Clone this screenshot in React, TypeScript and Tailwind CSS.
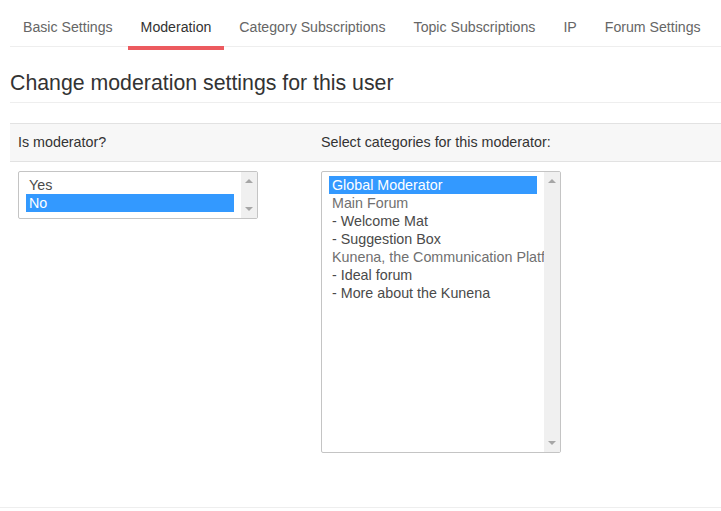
import React from "react";

const tabs = [
  "Basic Settings",
  "Moderation",
  "Category Subscriptions",
  "Topic Subscriptions",
  "IP",
  "Forum Settings",
];

type Option = { label: string; selected?: boolean; muted?: boolean };

function ListBox({
  options,
  height,
}: {
  options: Option[];
  height: string;
}) {
  return (
    <div
      className={`flex w-[240px] ${height} border border-[#c4c4c4] rounded-[2px] bg-white`}
    >
      <div className="flex-1 overflow-hidden pl-[7px] pt-[4px]">
        {options.map((o) => (
          <div
            key={o.label}
            className={`w-[208px] h-[18px] leading-[18px] pl-[3px] whitespace-nowrap text-[14.3px] ${
              o.selected
                ? "bg-[#3399ff] text-white"
                : o.muted
                ? "text-[#707070]"
                : "text-[#4a4a4a]"
            }`}
          >
            {o.label}
          </div>
        ))}
      </div>
      {/* fake scrollbar */}
      <div className="w-[16px] bg-[#f0f0f0] flex flex-col items-center justify-between pt-[7px] pb-[7px]">
        <span className="w-0 h-0 border-x-[4px] border-x-transparent border-b-[4px] border-b-[#a6a6a6]" />
        <span className="w-0 h-0 border-x-[4px] border-x-transparent border-t-[4px] border-t-[#a6a6a6]" />
      </div>
    </div>
  );
}

export default function App() {
  return (
    <div
      className="w-[721px] h-[511px] overflow-hidden bg-white text-[#333]"
      style={{ fontFamily: '"Liberation Sans", Arial, sans-serif' }}
    >
      <div className="pl-[10px]">
        {/* Tabs */}
        <ul className="flex items-start border-b border-[#eee] pt-[7px] w-[720px]">
          {tabs.map((t) => (
            <li
              key={t}
              className={`mr-[2px] px-[13px] pt-[10px] pb-[9px] leading-5 text-[14.15px] whitespace-nowrap border-b-4 -mb-[4px] ${
                t === "Moderation"
                  ? "border-[#ec5a5f] text-[#333]"
                  : "border-transparent text-[#666]"
              }`}
            >
              {t}
            </li>
          ))}
        </ul>

        {/* Heading */}
        <h3 className="mt-[25px] pb-[8px] text-[21.3px] leading-[22px] border-b border-[#eee] w-[720px]">
          Change moderation settings for this user
        </h3>

        {/* Table */}
        <div className="mt-[20px] w-[720px] border-t border-[#e2e2e2]">
          <div className="flex bg-[#f7f7f7] border-b border-[#e2e2e2] text-[14.3px] text-[#333] leading-[21px] py-[8px]">
            <div className="w-[303px] pl-[8px]">Is moderator?</div>
            <div className="pl-[8px]">Select categories for this moderator:</div>
          </div>
          <div className="flex items-start pt-[9px]">
            <div className="w-[303px] pl-[8px]">
              <ListBox
                height="h-[48px]"
                options={[{ label: "Yes" }, { label: "No", selected: true }]}
              />
            </div>
            <div className="pl-[8px]">
              <ListBox
                height="h-[282px]"
                options={[
                  { label: "Global Moderator", selected: true },
                  { label: "Main Forum", muted: true },
                  { label: "- Welcome Mat" },
                  { label: "- Suggestion Box" },
                  { label: "Kunena, the Communication Platform", muted: true },
                  { label: "- Ideal forum" },
                  { label: "- More about the Kunena" },
                ]}
              />
            </div>
          </div>
        </div>
      </div>
      <div className="mt-[54px] border-t border-[#eee]" />
    </div>
  );
}
